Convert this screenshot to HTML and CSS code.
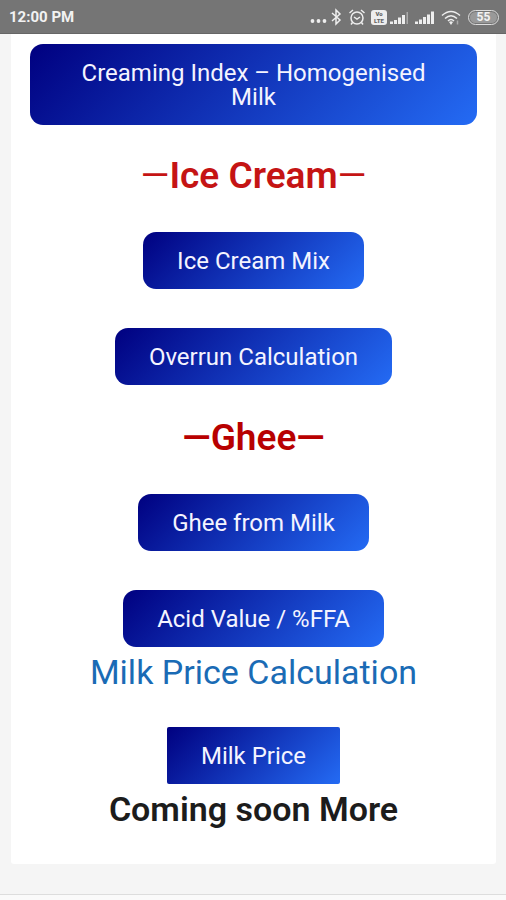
FILE: index.html
```html
<!DOCTYPE html>
<html lang="en">
<head>
<meta charset="utf-8">
<meta name="viewport" content="width=device-width, initial-scale=1">
<title>Dairy Calculations</title>
<link rel="stylesheet" href="styles.css">
</head>
<body>
<header class="status">
  <span class="clock">12:00 PM</span>
  <div class="indicators">
    <svg class="dots" width="18" height="18" viewBox="0 0 18 18"><circle cx="2.500" cy="13" r="1.900"/><circle cx="8.500" cy="13" r="1.900"/><circle cx="14.500" cy="13" r="1.900"/></svg>
    <svg class="bluetooth line" width="12" height="18" viewBox="0 0 12 18"><path d="M2 5l8 7-4 4V2l4 4-8 7"/></svg>
    <svg class="alarm line" width="18" height="18" viewBox="0 0 18 18"><circle cx="9" cy="10" r="6"/><path d="M1.500 5L5 2M13 2l3.500 3M6 9l3 2 3-2M4.500 14.500L3 16.500M13.500 14.500l1.500 2"/></svg>
    <span class="volte"><span>Vo</span><span>LTE</span></span>
    <svg class="signal" width="20" height="18" viewBox="0 0 20 18"><path d="M0 13.500h3V16H0zM4 12h3v4H4zM8 9.500h3V16H8zM12 7h3v9h-3z"/><path class="faint" d="M16.500 4H18v12h-1.500z"/></svg>
    <svg class="signal second" width="20" height="18" viewBox="0 0 20 18"><path d="M0 13.500h3V16H0zM4 11.500h3V16H4zM8 9h3v7H8zM12 6.500h3V16h-3zM16 3.500h3V16h-3z"/></svg>
    <svg class="wifi line" width="20" height="18" viewBox="0 0 20 18"><path d="M1 7.500Q10-.500 19 7.500M4 10.500Q10 5 16 10.500M7 13Q10 10 13 13"/><path class="fill" d="M8 14Q10 12.500 12 14L10 17z"/><path class="faint" d="M16.500 12.500v4"/></svg>
    <span class="battery"><span>55</span></span>
  </div>
</header>
<main class="card">
  <a class="button" href="#creaming">Creaming Index – Homogenised Milk</a>
  <section class="group">
    <h2 class="title red"><span class="thin">—</span>Ice Cream<span class="thin">—</span></h2>
    <a class="button" href="#mix">Ice Cream Mix</a>
    <a class="button" href="#overrun">Overrun Calculation</a>
  </section>
  <section class="group">
    <h2 class="title red dark">—Ghee—</h2>
    <a class="button" href="#ghee">Ghee from Milk</a>
    <a class="button" href="#acid">Acid Value / %FFA</a>
  </section>
  <section class="group close">
    <h2 class="title blue">Milk Price Calculation</h2>
    <a class="button square" href="#price">Milk Price</a>
  </section>
  <h2 class="title more">Coming soon More</h2>
</main>
<footer class="footer"></footer>
</body>
</html>
```
FILE: styles.css
```css
* { box-sizing: border-box; }
body {
  margin: 0;
  min-height: 100vh;
  display: flex;
  flex-direction: column;
  background: #f5f5f5;
  font-family: Roboto, "Liberation Sans", sans-serif;
}
.status {
  display: flex;
  align-items: center;
  justify-content: space-between;
  height: 34px;
  padding: 1px 7px 0 9px;
  background: #757575;
  border-bottom: 1px solid #666;
  color: #f2f2f2;
}
.clock { font-size: 15px; font-weight: 700; line-height: 20px; }
.indicators { display: flex; align-items: center; }
.indicators svg { fill: #eee; }
.indicators .line { fill: none; stroke: #eee; stroke-width: 1.5; }
.indicators .fill { fill: #eee; stroke: none; }
.indicators .faint { opacity: .45; }
.bluetooth { margin-left: 2px; }
.alarm { margin-left: 6px; }
.volte {
  display: flex;
  flex-direction: column;
  align-items: center;
  justify-content: center;
  width: 16px;
  height: 15px;
  margin-left: 5px;
  border-radius: 3px;
  background: #eee;
  color: #666;
  font-size: 6px;
  font-weight: 900;
  line-height: 7px;
}
.signal { margin-left: 3px; }
.second { margin-left: 5px; }
.wifi { margin-left: 6px; }
.battery {
  display: flex;
  width: 31px;
  height: 15px;
  margin-left: 7px;
  padding: 1px;
  border: 1px solid #ddd;
  border-radius: 8px;
  font-size: 12px;
  font-weight: 700;
  line-height: 11px;
}
.battery span { flex: 1; border-radius: 6px; background: #999; text-align: center; }
.card {
  display: flex;
  flex-direction: column;
  align-items: center;
  margin: 0 10px 0 11px;
  padding: 10px 19px 37px;
  border-radius: 0 0 3px 3px;
  background: #fff;
  text-align: center;
}
.group {
  display: flex;
  flex-direction: column;
  align-items: center;
  gap: 38px;
  margin-top: 33px;
}
.group + .group { margin-top: 35px; }
.group + .close { margin-top: 7px; gap: 37px; }
.button {
  padding: 17px 34px 16px;
  border-radius: 13px;
  background: linear-gradient(135deg, #000080, #246bf4);
  color: #f4f4ff;
  font-size: 24px;
  line-height: 24px;
  text-decoration: none;
}
.button + .button { margin-top: 1px; }
.square { border-radius: 2px; }
.title { margin: 0; font-size: 37px; font-weight: 600; line-height: 36px; }
.thin { font-weight: 400; }
.red { color: #c51414; }
.dark { color: #b80000; }
.blue { color: #1a6bb5; font-size: 34px; font-weight: 400; }
.more { margin-top: 7px; color: #1c1c1c; font-size: 34px; }
.footer { margin-top: 30px; flex: 1; border-top: 1px solid #ddd; background: #fafafa; }
```
